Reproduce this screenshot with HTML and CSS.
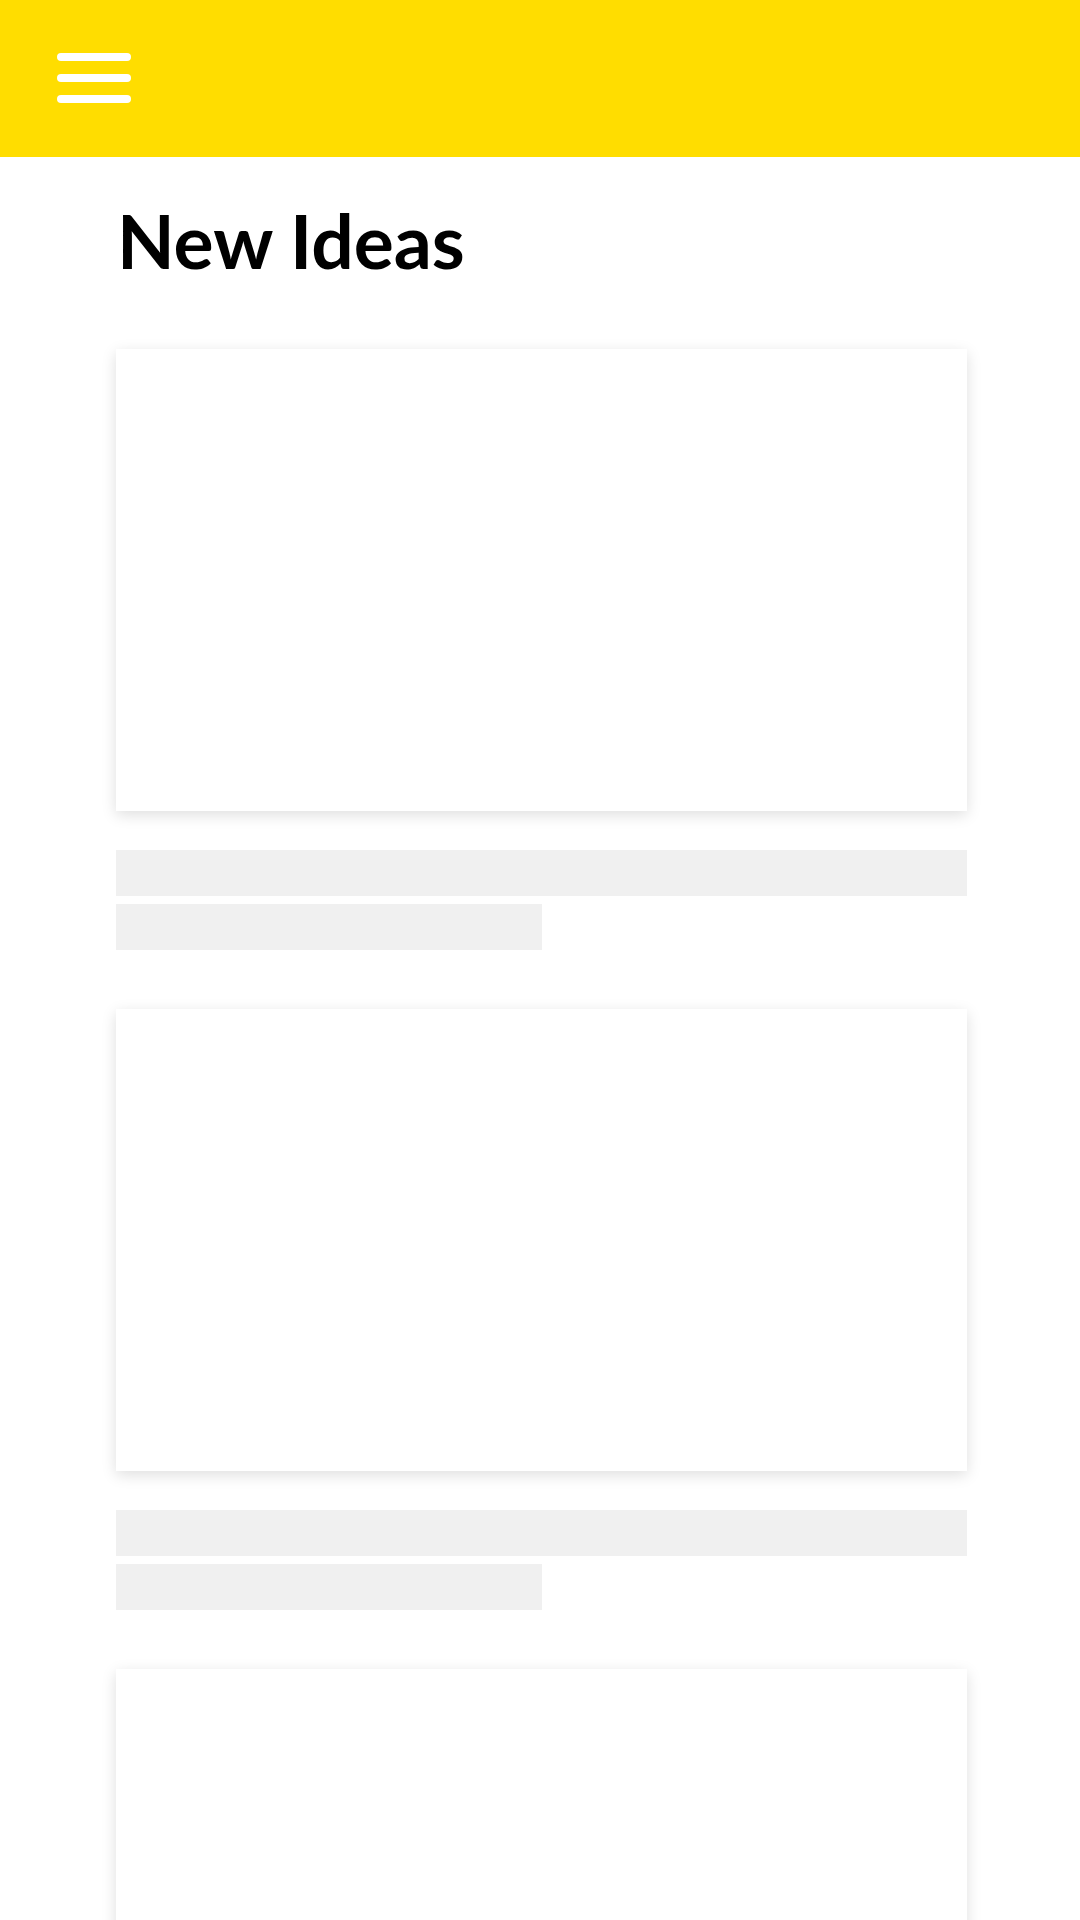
FILE: index.html
```html
<!DOCTYPE html>
<html lang="en">
<head>
<meta charset="utf-8">
<title>New Ideas</title>
<link rel="stylesheet" href="styles.css">
</head>
<body>
<header class="topbar">
  <button class="menu" aria-label="Menu">
    <span class="menu-line"></span>
    <span class="menu-line"></span>
    <span class="menu-line"></span>
  </button>
</header>
<main class="content">
  <h1 class="title">New Ideas</h1>
  <section class="feed">
    <article class="idea">
      <div class="idea-card"></div>
      <div class="skeleton skeleton-full"></div>
      <div class="skeleton skeleton-half"></div>
    </article>
    <article class="idea">
      <div class="idea-card"></div>
      <div class="skeleton skeleton-full"></div>
      <div class="skeleton skeleton-half"></div>
    </article>
    <article class="idea">
      <div class="idea-card"></div>
      <div class="skeleton skeleton-full"></div>
      <div class="skeleton skeleton-half"></div>
    </article>
  </section>
</main>
</body>
</html>
```
FILE: styles.css
```css
html, body {
  margin: 0;
  padding: 0;
  background: #ffffff;
}
body {
  font-family: Lato, "Noto Sans", sans-serif;
  overflow: hidden;
  height: 1920px;
}
.topbar {
  height: 157px;
  background: #ffdd00;
  display: flex;
  align-items: flex-start;
}
.menu {
  margin: 53px 0 0 57px;
  padding: 0;
  border: 0;
  background: none;
  width: 74px;
  display: flex;
  flex-direction: column;
  gap: 13px;
}
.menu-line {
  display: block;
  width: 74px;
  height: 8px;
  border-radius: 4px;
  background: #ffffff;
}
.content {
  padding: 0 113px 0 116px;
}
.title {
  margin: 46px 0 0 1px;
  font-size: 75px;
  line-height: 75px;
  font-weight: 700;
  color: #000000;
  letter-spacing: 0;
}
.feed {
  margin-top: 71px;
  display: flex;
  flex-direction: column;
  gap: 59px;
}
.idea {
  display: flex;
  flex-direction: column;
}
.idea-card {
  height: 462px;
  background: #ffffff;
  box-shadow: 0 4px 14px rgba(0, 0, 0, 0.13);
}
.skeleton {
  height: 46px;
  background: #f0f0f0;
}
.skeleton-full {
  margin-top: 39px;
}
.skeleton-half {
  margin-top: 8px;
  width: 50%;
}
```
